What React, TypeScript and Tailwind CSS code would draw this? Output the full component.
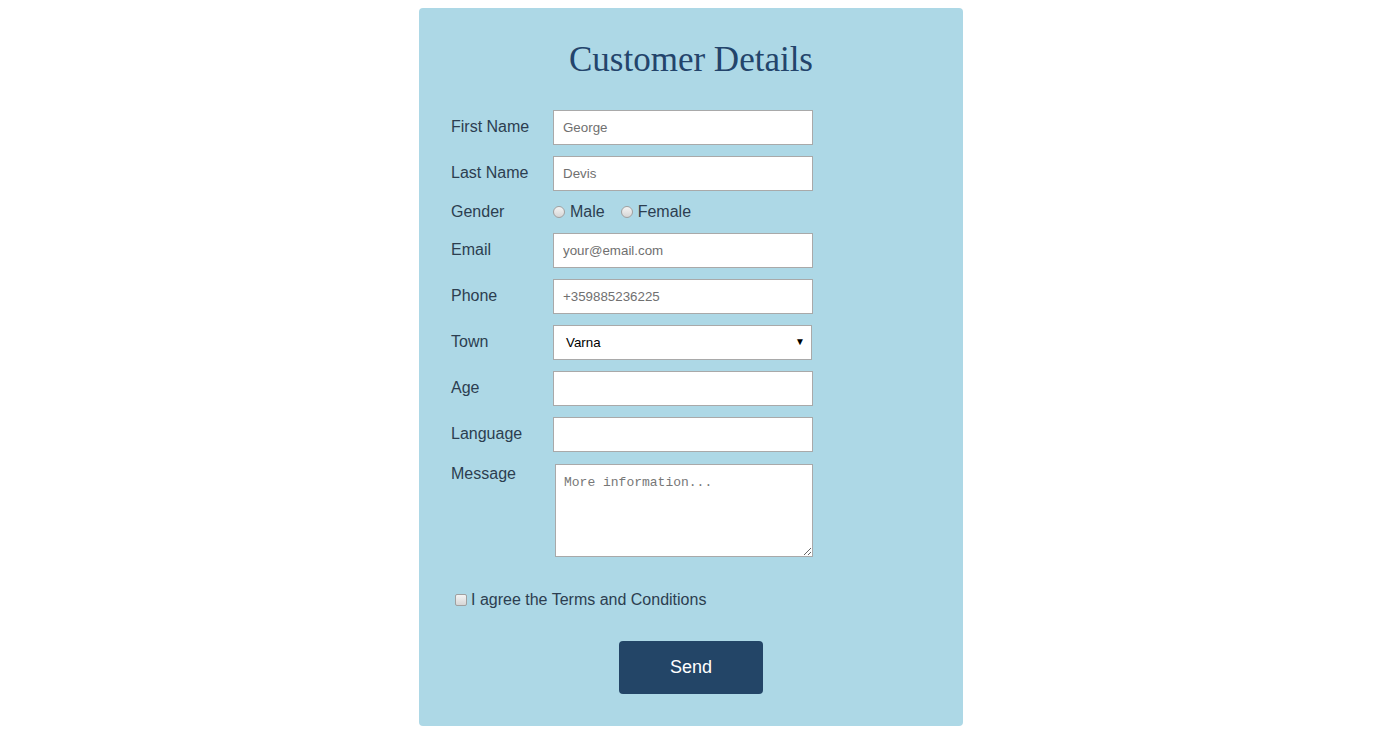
import React from 'react';

const labelCls = 'w-[102px] shrink-0 text-[16px] text-[#2c3e50]';
const inputCls =
  'w-[260px] h-[35px] border border-[#a9a9a9] bg-white px-[9px] text-[13.333px] text-[#555] outline-none placeholder:text-[#707070]';

const Row: React.FC<{ label: string; children: React.ReactNode }> = ({ label, children }) => (
  <div className="flex items-center">
    <span className={`${labelCls} -mt-[2px]`}>{label}</span>
    {children}
  </div>
);

const Radio: React.FC<{ label: string }> = ({ label }) => (
  <label className="flex items-center mr-[16px]">
    <span className="w-[12px] h-[12px] rounded-full border border-[#a0a0a0] bg-gradient-to-b from-[#f4f4f4] to-[#d6d6d6] mr-[5px]" />
    <span className="text-[16px] text-[#2c3e50]">{label}</span>
  </label>
);

const App: React.FC = () => {
  return (
    <div className="min-h-screen bg-white pt-[8px] pl-[8px]" style={{ fontFamily: '"Liberation Sans", Arial, sans-serif' }}>
      <div className="mx-auto w-[544px] h-[718px] rounded-[4px] bg-[#add8e6] px-[32px] pt-[30px]">
        <h1
          className="text-center text-[35px] leading-[44px] text-[#23446b]"
          style={{ fontFamily: '"Liberation Serif", Georgia, serif' }}
        >
          Customer Details
        </h1>
        <form className="mt-[28px] flex flex-col">
          <Row label="First Name">
            <input className={inputCls} placeholder="George" />
          </Row>
          <div className="mt-[11px]">
            <Row label="Last Name">
              <input className={inputCls} placeholder="Devis" />
            </Row>
          </div>
          <div className="mt-[11px] h-[20px] flex items-center">
            <span className={labelCls}>Gender</span>
            <Radio label="Male" />
            <Radio label="Female" />
          </div>
          <div className="mt-[11px]">
            <Row label="Email">
              <input className={inputCls} placeholder="your@email.com" />
            </Row>
          </div>
          <div className="mt-[11px]">
            <Row label="Phone">
              <input className={inputCls} placeholder="+359885236225" />
            </Row>
          </div>
          <div className="mt-[11px]">
            <Row label="Town">
              <div className="relative w-[259px] h-[35px] border border-[#a9a9a9] bg-white flex items-center pl-[12px] text-[13.333px] text-black">
                Varna
                <span className="absolute right-[6px] top-[11px] text-[10px] leading-none">▼</span>
              </div>
            </Row>
          </div>
          <div className="mt-[11px]">
            <Row label="Age">
              <input className={inputCls} />
            </Row>
          </div>
          <div className="mt-[11px]">
            <Row label="Language">
              <input className={inputCls} />
            </Row>
          </div>
          <div className="mt-[12px] flex items-start">
            <span className={`${labelCls} -mt-[2px]`}>Message</span>
            <textarea
              className="ml-[2px] w-[258px] h-[93px] border border-[#a9a9a9] bg-white px-[8px] py-[8px] text-[13px] text-[#555] outline-none placeholder:text-[#777]"
              style={{ fontFamily: '"Liberation Mono", monospace' }}
              placeholder="More information..."
            />
          </div>
          <label className="mt-[31px] ml-[4px] flex items-center">
            <span className="w-[12px] h-[12px] rounded-[2px] border border-[#a0a0a0] bg-gradient-to-b from-[#f4f4f4] to-[#d6d6d6] mr-[4px]" />
            <span className="text-[16px] text-[#2c3e50]">I agree the Terms and Conditions</span>
          </label>
          <div className="mt-[29px] flex justify-center">
            <button
              type="button"
              className="w-[144px] h-[53px] rounded-[4px] bg-[#234567] text-white text-[18px]"
            >
              Send
            </button>
          </div>
        </form>
      </div>
    </div>
  );
};

export default App;
